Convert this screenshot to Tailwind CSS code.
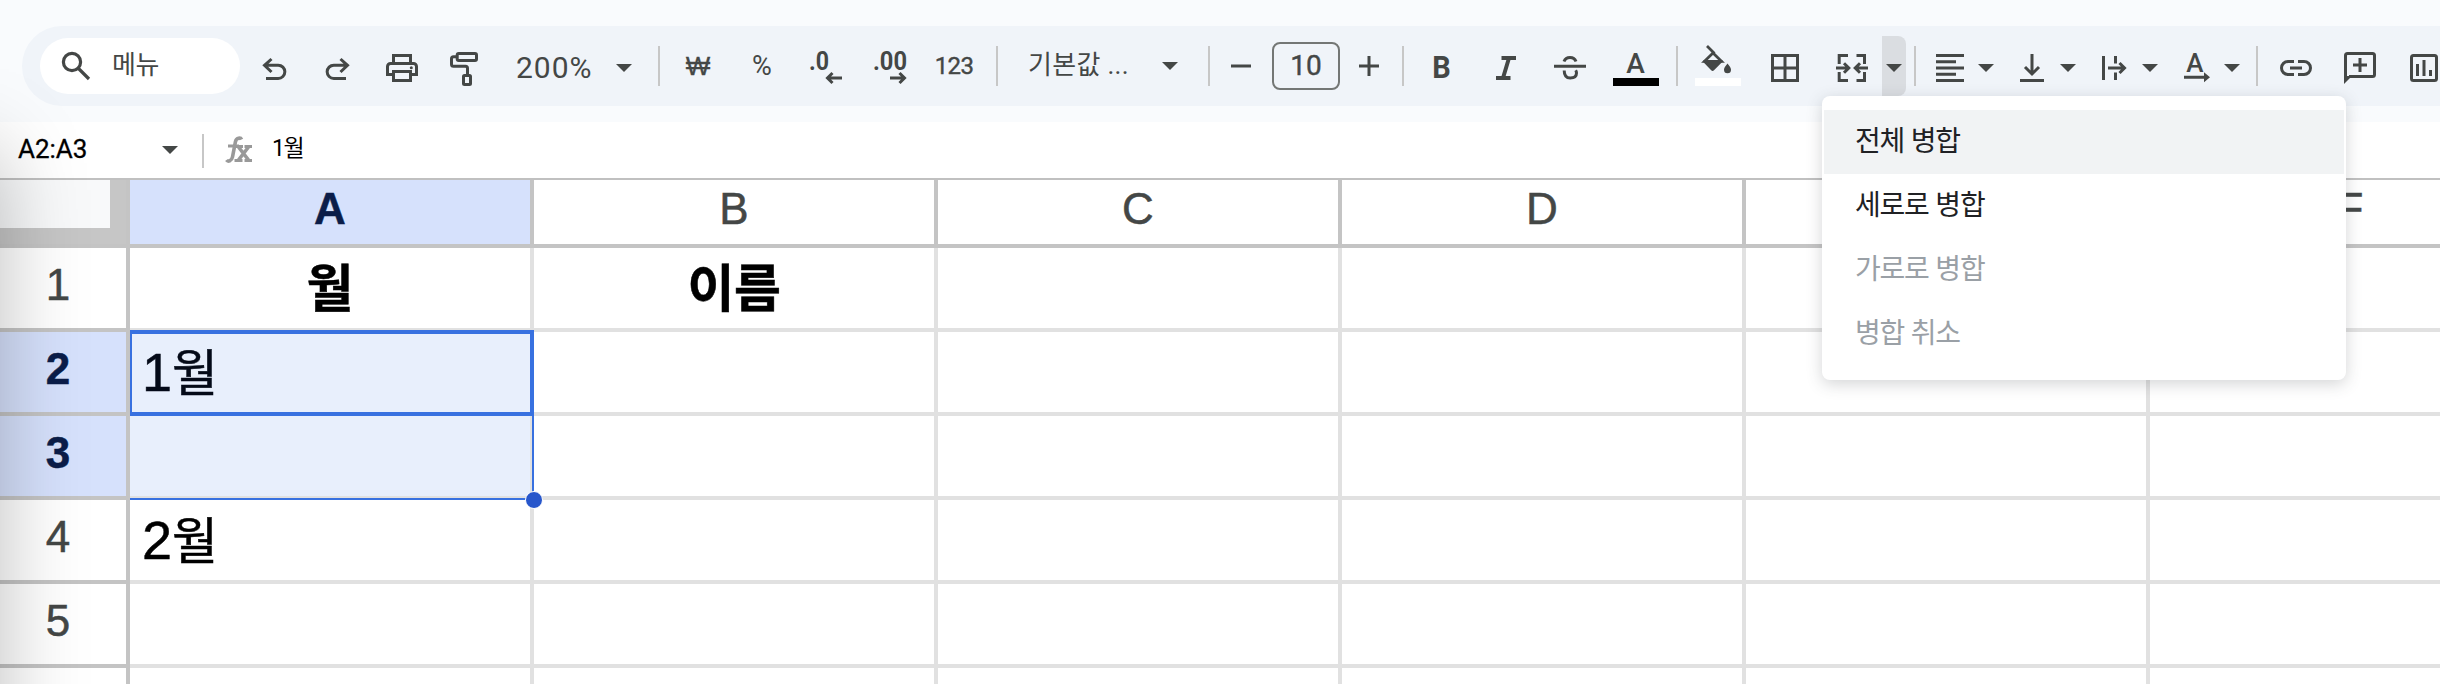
<!DOCTYPE html>
<html lang="ko">
<head>
    <meta charset="UTF-8">
    <meta name="viewport" content="width=device-width, initial-scale=1.0">
    <title>Spreadsheet</title>
    <script src="https://cdn.jsdelivr.net/npm/@tailwindcss/browser@4"></script>
</head>
<body class="overflow-hidden">
<main class="relative w-[2440px] h-[684px] overflow-hidden bg-[#f9fbfd] text-[#444746] font-[Roboto,'Noto_Sans_CJK_KR',sans-serif]">

    <!-- Toolbar -->
    <div class="pt-[26px] pl-[22px] h-[122px]">
        <div class="flex items-center h-20 w-[2500px] rounded-l-full bg-[#f0f4f9] pl-[18px]">
            <!-- Menu search -->
            <div class="flex items-center w-[200px] h-14 rounded-full bg-white pl-4 mr-0.5 shrink-0">
                <svg class="size-10" viewBox="0 0 40 40" fill="none" stroke="#444746" stroke-width="3.2"><circle cx="16" cy="16" r="8.6"/><path d="M22 22l11 11"/></svg>
                <span class="ml-4 -mt-0.5 text-[26px] leading-8 tracking-[-0.5px]">메뉴</span>
            </div>

            <!-- History, print, paint format -->
            <div class="flex pt-1 pl-3 gap-6 w-64 shrink-0">
                <svg class="size-10" viewBox="0 0 40 40" fill="none" stroke="#444746" stroke-width="3"><path d="M10.500 17.200H24.200a6.600 6.600 0 0 1 0 13.300H12M17.500 11l-7 6.300 7 6.700"/></svg>
                <svg class="size-10" viewBox="0 0 40 40" fill="none" stroke="#444746" stroke-width="3"><path d="M29.500 17.200H15.800a6.600 6.600 0 0 0 0 13.300H28M22.500 11l7 6.300-7 6.700"/></svg>
                <svg class="size-10" viewBox="0 0 40 40" fill="none" stroke="#444746" stroke-width="3"><path d="M11.500 15V7.500h17V15M11.500 26.500h-6v-8a3 3 0 0 1 3-3h23a3 3 0 0 1 3 3v8h-6"/><path d="M11.500 23.500h17v9h-17z"/><circle cx="29.300" cy="19.700" r="1.500" fill="#444746" stroke="none"/></svg>
                <svg class="size-10" viewBox="0 0 40 40" fill="none" stroke="#444746" stroke-width="3"><rect x="11.200" y="5.500" width="19.300" height="7" rx="1.500"/><path d="M10 8.800H7.500a2 2 0 0 0-2 2v5.500a2 2 0 0 0 2 2h12a2 2 0 0 1 2 2V27"/><rect x="17.500" y="27.500" width="7" height="9" rx="1"/></svg>
            </div>

            <!-- Zoom -->
            <div class="flex items-center w-[160px] shrink-0 pl-[18px] pt-1">
                <span class="w-[100px] text-[30px] leading-8 tracking-[1px]">200%</span>
                <svg class="w-4 h-2" viewBox="0 0 16 8" fill="#444746"><path d="M0 0h16L8 8z"/></svg>
            </div>
            <div class="w-0.5 h-10 bg-[#c7c7c7] shrink-0"></div>

            <!-- Number formats -->
            <div class="flex items-center w-[336px] shrink-0 pl-1.5 text-[25px] leading-8">
                <span class="w-16 text-center text-[26px] font-['Liberation_Sans',sans-serif] [-webkit-text-stroke:0.3px]">₩</span>
                <span class="w-16 text-center text-[27px]">%</span>
                <span class="w-16 flex justify-center pt-1">
                    <svg class="size-10" viewBox="0 0 40 40" fill="none" stroke="#444746" stroke-width="3"><text x="3" y="21.500" font-size="25" font-weight="700" fill="#444746" stroke="none" textLength="20" lengthAdjust="spacingAndGlyphs">.0</text><path d="M36 30H22M26.500 25l-5 5 5 5"/></svg>
                </span>
                <span class="w-16 flex justify-center pt-1">
                    <svg class="size-10" viewBox="0 0 40 40" fill="none" stroke="#444746" stroke-width="3"><text x="3" y="21.500" font-size="25" font-weight="700" fill="#444746" stroke="none" textLength="34" lengthAdjust="spacingAndGlyphs">.00</text><path d="M20 30H34M29.500 25l5 5-5 5"/></svg>
                </span>
                <span class="w-16 text-center text-[24px] tracking-[-0.6px] [-webkit-text-stroke:0.4px]">123</span>
            </div>
            <div class="w-0.5 h-10 bg-[#c7c7c7] shrink-0"></div>

            <!-- Font family -->
            <div class="flex items-center w-[210px] shrink-0 pl-[30px]">
                <span class="w-[134px] -mt-0.5 text-[26px] leading-8 tracking-[0.3px] whitespace-nowrap">기본값 ...</span>
                <svg class="w-4 h-2" viewBox="0 0 16 8" fill="#444746"><path d="M0 0h16L8 8z"/></svg>
            </div>
            <div class="w-0.5 h-10 bg-[#c7c7c7] shrink-0"></div>

            <!-- Font size -->
            <div class="flex items-center w-[192px] shrink-0">
                <svg class="w-[62px] h-10" viewBox="0 0 62 40" stroke="#444746" stroke-width="3"><path d="M21 20h20"/></svg>
                <div class="flex items-center justify-center w-[68px] h-12 rounded-lg border-2 border-[#747775] text-[28px] leading-8 [-webkit-text-stroke:0.4px]">10</div>
                <svg class="w-[62px] h-10" viewBox="0 0 62 40" stroke="#444746" stroke-width="3"><path d="M19 20h20M29 10v20"/></svg>
            </div>
            <div class="w-0.5 h-10 bg-[#c7c7c7] shrink-0"></div>

            <!-- Text style -->
            <div class="flex pt-1 pl-[18px] gap-6 w-[272px] shrink-0">
                <svg class="size-10" viewBox="0 0 40 40"><text x="10.300" y="30" font-size="31" font-weight="700" fill="#444746" textLength="18.500" lengthAdjust="spacingAndGlyphs">B</text></svg>
                <svg class="size-10" viewBox="0 0 40 40" stroke="#444746" stroke-width="4"><path d="M15.500 10H30M10 30h14.500M23 10l-6 20"/></svg>
                <svg class="size-10" viewBox="0 0 40 40" fill="none" stroke="#444746" stroke-width="3"><path d="M4 18.300h32M14 13.500c1-2.600 3.200-4 6-4s5 1.400 6 4M14.200 22.500c0 5 2.300 7.500 6 7.500 4 0 6.300-2 6.300-5 0-1.200-.3-2-.8-2.800"/></svg>
                <svg class="size-10 overflow-visible" viewBox="0 0 40 40"><text x="12.300" y="25" font-size="28" font-weight="500" fill="#444746">A</text><path d="M-1 30h46v8H-1z" fill="#000"/></svg>
            </div>
            <div class="w-0.5 h-10 bg-[#c7c7c7] shrink-0"></div>

            <!-- Fill, borders, merge -->
            <div class="flex pt-1 pl-5 gap-6 w-[153px] shrink-0">
                <svg class="size-10 overflow-visible" viewBox="0 0 40 40" fill="#444746"><path d="M9-2l6.500 6.500L6.500 13.300h17L14.500 4.500" fill="none" stroke="#444746" stroke-width="2.800"/><path d="M5 12.500h19.700v1L16 22.300a2 2 0 0 1-2.800 0L5 13.700zM29.500 15.500c2.300 2.800 3.500 4.600 3.500 6.200a3.500 3.500 0 0 1-7 0c0-1.600 1.200-3.400 3.500-6.200z"/><path d="M-3 30h46v8H-3z" fill="#fff"/></svg>
                <svg class="size-10" viewBox="0 0 40 40" fill="none" stroke="#444746" stroke-width="3"><path d="M10.500 7.500h25v25h-25zM23 7v26M10 20h26"/></svg>
            </div>
            <svg class="size-10 mt-1 mr-[11px] shrink-0" viewBox="0 0 40 40" fill="none" stroke="#444746" stroke-width="3"><path d="M8.200 16V7.500H17M25.500 7.500h8V16M8.200 24v8.500H17M25.500 32.500h8V24M5 20h12M13 15.200l4.800 4.800-4.800 4.800M37 20H25M29 15.200L24.200 20l4.800 4.800"/></svg>
            <div class="flex items-center justify-center w-6 h-[60px] rounded-r-lg bg-[#dadde1] shrink-0 pt-1">
                <svg class="w-4 h-2" viewBox="0 0 16 8" fill="#444746"><path d="M0 0h16L8 8z"/></svg>
            </div>
            <div class="ml-2 w-0.5 h-10 bg-[#c7c7c7] shrink-0"></div>

            <!-- Alignment, wrapping, rotation -->
            <div class="flex items-center pt-1 pl-3.5 gap-[18px] w-[340px] shrink-0">
                <div class="flex items-center gap-2">
                    <svg class="size-10" viewBox="0 0 40 40" stroke="#444746" stroke-width="3"><path d="M6 7.500h28M6 13.700h20M6 20h28M6 26.300h20M6 32.500h28"/></svg>
                    <svg class="w-4 h-2" viewBox="0 0 16 8" fill="#444746"><path d="M0 0h16L8 8z"/></svg>
                </div>
                <div class="flex items-center gap-2">
                    <svg class="size-10" viewBox="0 0 40 40" fill="none" stroke="#444746" stroke-width="3"><path d="M20 6v20M13 19l7 7 7-7M8 32.500h24"/></svg>
                    <svg class="w-4 h-2" viewBox="0 0 16 8" fill="#444746"><path d="M0 0h16L8 8z"/></svg>
                </div>
                <div class="flex items-center gap-2">
                    <svg class="size-10" viewBox="0 0 40 40" fill="none" stroke="#444746" stroke-width="3"><path d="M9.500 8v24M21.500 8v7.500M21.500 24.500V32M14 20h16M25.500 15l5 5-5 5"/></svg>
                    <svg class="w-4 h-2" viewBox="0 0 16 8" fill="#444746"><path d="M0 0h16L8 8z"/></svg>
                </div>
                <div class="flex items-center gap-2">
                    <svg class="size-10" viewBox="0 0 40 40" fill="#444746"><text x="10.200" y="24" font-size="26" font-weight="500">A</text><path d="M8 27.700h20v-3.500l6 5-6 5v-3.500H8z"/></svg>
                    <svg class="w-4 h-2" viewBox="0 0 16 8" fill="#444746"><path d="M0 0h16L8 8z"/></svg>
                </div>
            </div>
            <div class="w-0.5 h-10 bg-[#c7c7c7] shrink-0"></div>

            <!-- Insert -->
            <div class="flex pt-1 pl-[18px] gap-6 shrink-0">
                <svg class="size-10" viewBox="0 0 40 40" fill="none" stroke="#444746" stroke-width="3"><path d="M18 13.500h-6a6.500 6.500 0 0 0 0 13h6M22 13.500h6a6.500 6.500 0 0 1 0 13h-6M14 20h12"/></svg>
                <svg class="size-10" viewBox="0 0 40 40" fill="none" stroke="#444746" stroke-width="3"><path d="M5.500 32V7.500a2 2 0 0 1 2-2h25a2 2 0 0 1 2 2v19a2 2 0 0 1-2 2H9M20 10v14M13 17h14"/><path d="M4 36V28h8z" fill="#444746" stroke="none"/></svg>
                <svg class="size-10" viewBox="0 0 40 40" fill="none" stroke="#444746" stroke-width="3"><rect x="7.500" y="7.500" width="25" height="25" rx="2"/><path d="M13.500 16v12M20 12v16M26.500 22v6"/></svg>
            </div>
        </div>
    </div>

    <!-- Formula bar -->
    <div class="flex items-center h-[58px] bg-white border-b-2 border-[#c0c0c0] text-black">
        <span class="w-[162px] pl-[18px] -mt-0.5 text-[26px] leading-8 [-webkit-text-stroke:0.3px]">A2:A3</span>
        <svg class="w-4 h-2" viewBox="0 0 16 8" fill="#444746"><path d="M0 0h16L8 8z"/></svg>
        <div class="ml-6 mt-0.5 w-0.5 h-[34px] bg-[#c7c7c7]"></div>
        <svg class="ml-5 w-8 h-10" viewBox="0 0 32 40" fill="none" stroke="#999"><path d="M17.500 9.500c-.8-2-5-2-6 2L8.500 27c-.8 4-4.500 5-6 3" stroke-width="3.600"/><path d="M4 16h11" stroke-width="3"/><path d="M14.500 17l10 13M24.500 17L14.500 30" stroke-width="3.600"/><path d="M12 16.500h7M20.500 16.500H28M10.500 30.500h8M20.500 30.500H28" stroke-width="3"/></svg>
        <span class="ml-4 -mt-0.5 text-[23px] leading-8 tracking-[-1.5px]">1월</span>
    </div>

    <!-- Sheet -->
    <div class="grid grid-cols-[130px_repeat(6,404px)] grid-rows-[68px_repeat(5,84px)_16px] w-[2554px] bg-white font-['Liberation_Sans','Noto_Sans_CJK_KR',sans-serif] *:border-r-4 *:border-b-4 *:border-[#e1e1e1] text-[44px] leading-[50px] text-center [-webkit-text-stroke:0.5px]">
        <div class="border-[#c4c4c4]! bg-[#c6c6c6]"><div class="w-[110px] h-12 bg-[#f8f9fa]"></div></div>
        <div class="border-[#c4c4c4]! bg-[#d6e1fc] text-[#0b1d49] font-bold pt-1">A</div>
        <div class="border-[#c4c4c4]! pt-1">B</div>
        <div class="border-[#c4c4c4]! pt-1">C</div>
        <div class="border-[#c4c4c4]! pt-1">D</div>
        <div class="border-[#c4c4c4]! pt-1"></div>
        <div class="border-[#c4c4c4]! pt-1">F</div>

        <div class="border-[#c4c4c4]! pt-3 pr-2.5">1</div>
        <div class="text-black font-bold text-[51px] leading-[84px]">월</div>
        <div class="text-black font-bold text-[51px] leading-[84px] tracking-[-0.5px]">이름</div>
        <div></div><div></div><div></div><div></div>

        <div class="border-[#c4c4c4]! bg-[#d6e1fc] text-[#0b1d49] font-bold pt-3 pr-2.5">2</div>
        <div class="bg-[#e8effc] text-[#040a18] text-left text-[50px] leading-[80px] pl-3"><span class="text-[54px]">1</span>월</div>
        <div></div><div></div><div></div><div></div><div></div>

        <div class="border-[#c4c4c4]! bg-[#d6e1fc] text-[#0b1d49] font-bold pt-3 pr-2.5">3</div>
        <div class="bg-[#e8effc]"></div>
        <div></div><div></div><div></div><div></div><div></div>

        <div class="border-[#c4c4c4]! pt-3 pr-2.5">4</div>
        <div class="text-black text-left text-[50px] leading-[80px] pl-3"><span class="text-[54px]">2</span>월</div>
        <div></div><div></div><div></div><div></div><div></div>

        <div class="border-[#c4c4c4]! pt-3 pr-2.5">5</div>
        <div></div><div></div><div></div><div></div><div></div><div></div>

        <div class="border-[#c4c4c4]! border-b-0!"></div>
        <div class="border-b-0!"></div><div class="border-b-0!"></div><div class="border-b-0!"></div><div class="border-b-0!"></div><div class="border-b-0!"></div><div class="border-b-0!"></div>
    </div>

    <!-- Selection outline over the grid -->
    <div class="absolute left-[130px] top-[330px] w-[404px] h-[170px] border-r-2 border-b-2 border-[#3871e0]">
        <div class="w-[404px] h-[86px] border-4 border-l-2 border-[#3871e0]"></div>
        <div class="absolute -right-[11px] -bottom-[11px] size-[18px] rounded-full bg-[#2756cb] border-[1.5px] border-white"></div>
    </div>

    <!-- Soft shade along the left edge -->
    <div class="absolute -left-[300px] top-[150px] w-[300px] h-[900px] shadow-[0_0_80px_rgba(0,0,0,0.26)]"></div>

    <!-- Merge menu -->
    <div class="absolute left-[1822px] top-24 w-[524px] h-[284px] rounded-lg bg-white px-0.5 py-3.5 shadow-[0_4px_16px_rgba(60,64,67,0.22)] text-[28px] leading-[58px] tracking-[-1.2px] font-['Noto_Sans_CJK_KR',sans-serif] text-[#202124]">
        <div class="h-16 pl-[31px] bg-[#f1f3f4]">전체 병합</div>
        <div class="h-16 pl-[31px]">세로로 병합</div>
        <div class="h-16 pl-[31px] text-[#9aa0a6]">가로로 병합</div>
        <div class="h-16 pl-[31px] text-[#9aa0a6]">병합 취소</div>
    </div>
</main>
</body>
</html>
